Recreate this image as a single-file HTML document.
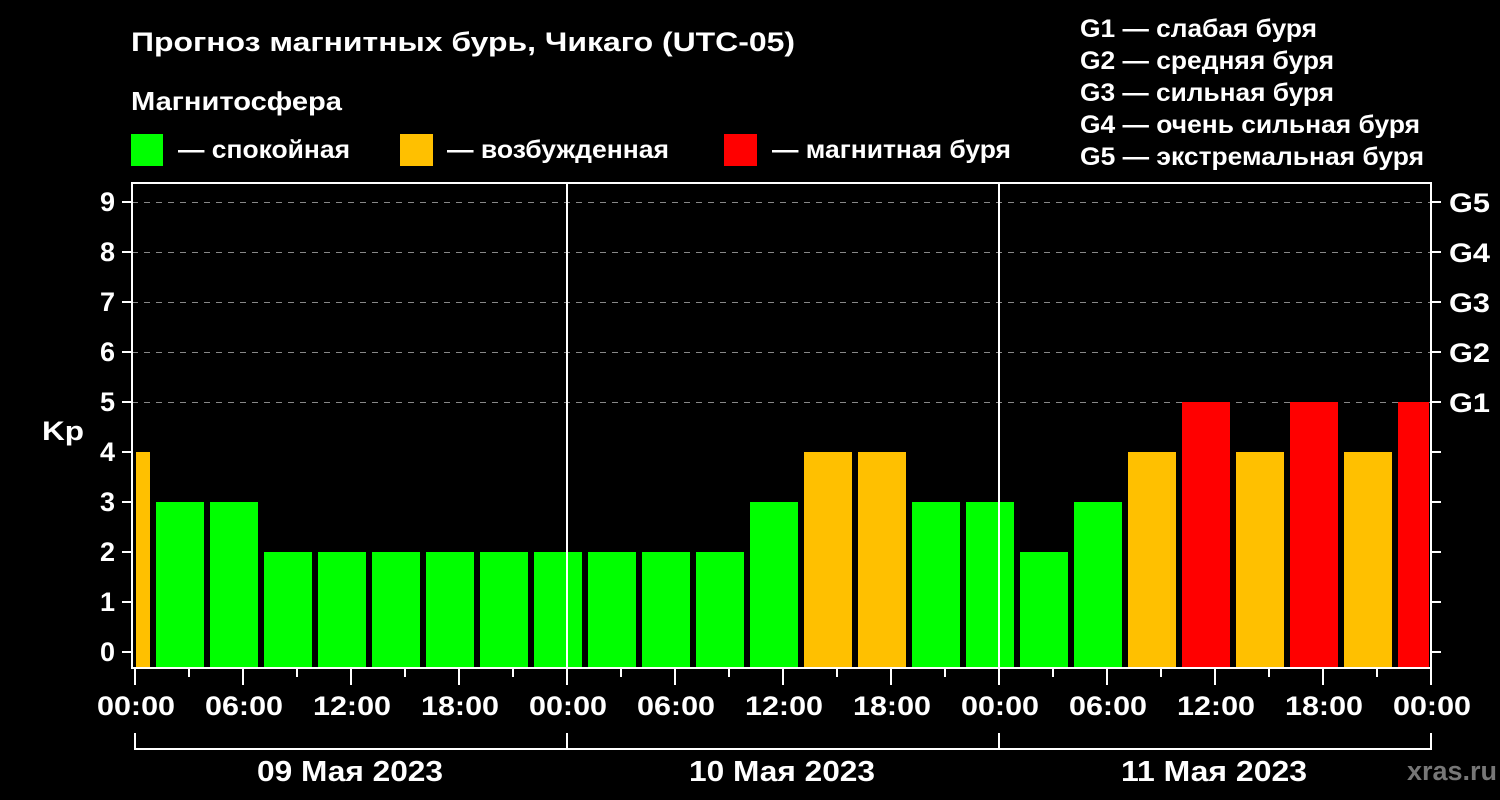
<!DOCTYPE html><html><head><meta charset="utf-8"><style>body{margin:0;background:#000}svg{display:block}text{font-family:"Liberation Sans",sans-serif;font-weight:bold;fill:#fff}</style></head><body>
<svg width="1500" height="800" xmlns="http://www.w3.org/2000/svg">
<rect width="1500" height="800" fill="#000"/>
<text x="131" y="51" font-size="27" textLength="664" lengthAdjust="spacingAndGlyphs">Прогноз магнитных бурь, Чикаго (UTC-05)</text>
<text x="131" y="110" font-size="26" textLength="211" lengthAdjust="spacingAndGlyphs">Магнитосфера</text>
<rect x="131" y="134" width="32" height="32" fill="#00ff00"/><text x="178" y="158" font-size="25" textLength="172" lengthAdjust="spacingAndGlyphs">— спокойная</text>
<rect x="400" y="134" width="33" height="32" fill="#ffc000"/><text x="447" y="158" font-size="25" textLength="222" lengthAdjust="spacingAndGlyphs">— возбужденная</text>
<rect x="724" y="134" width="33" height="32" fill="#ff0000"/><text x="772" y="158" font-size="25" textLength="239" lengthAdjust="spacingAndGlyphs">— магнитная буря</text>
<g font-size="25"><text x="1080" y="37" textLength="237" lengthAdjust="spacingAndGlyphs">G1 — слабая буря</text><text x="1080" y="69" textLength="254" lengthAdjust="spacingAndGlyphs">G2 — средняя буря</text><text x="1080" y="101" textLength="254" lengthAdjust="spacingAndGlyphs">G3 — сильная буря</text><text x="1080" y="133" textLength="340" lengthAdjust="spacingAndGlyphs">G4 — очень сильная буря</text><text x="1080" y="165" textLength="344" lengthAdjust="spacingAndGlyphs">G5 — экстремальная буря</text></g>
<g stroke="#888" stroke-width="1" stroke-dasharray="6,6"><line x1="132" y1="202.5" x2="1431" y2="202.5"/><line x1="132" y1="252.5" x2="1431" y2="252.5"/><line x1="132" y1="302.5" x2="1431" y2="302.5"/><line x1="132" y1="352.5" x2="1431" y2="352.5"/><line x1="132" y1="402.5" x2="1431" y2="402.5"/></g>
<g>
<rect x="136" y="452" width="14" height="216" fill="#ffc000"/>
<rect x="156" y="502" width="48" height="166" fill="#00ff00"/>
<rect x="210" y="502" width="48" height="166" fill="#00ff00"/>
<rect x="264" y="552" width="48" height="116" fill="#00ff00"/>
<rect x="318" y="552" width="48" height="116" fill="#00ff00"/>
<rect x="372" y="552" width="48" height="116" fill="#00ff00"/>
<rect x="426" y="552" width="48" height="116" fill="#00ff00"/>
<rect x="480" y="552" width="48" height="116" fill="#00ff00"/>
<rect x="534" y="552" width="48" height="116" fill="#00ff00"/>
<rect x="588" y="552" width="48" height="116" fill="#00ff00"/>
<rect x="642" y="552" width="48" height="116" fill="#00ff00"/>
<rect x="696" y="552" width="48" height="116" fill="#00ff00"/>
<rect x="750" y="502" width="48" height="166" fill="#00ff00"/>
<rect x="804" y="452" width="48" height="216" fill="#ffc000"/>
<rect x="858" y="452" width="48" height="216" fill="#ffc000"/>
<rect x="912" y="502" width="48" height="166" fill="#00ff00"/>
<rect x="966" y="502" width="48" height="166" fill="#00ff00"/>
<rect x="1020" y="552" width="48" height="116" fill="#00ff00"/>
<rect x="1074" y="502" width="48" height="166" fill="#00ff00"/>
<rect x="1128" y="452" width="48" height="216" fill="#ffc000"/>
<rect x="1182" y="402" width="48" height="266" fill="#ff0000"/>
<rect x="1236" y="452" width="48" height="216" fill="#ffc000"/>
<rect x="1290" y="402" width="48" height="266" fill="#ff0000"/>
<rect x="1344" y="452" width="48" height="216" fill="#ffc000"/>
<rect x="1398" y="402" width="31" height="266" fill="#ff0000"/>
</g>
<g stroke="#fff" stroke-width="2" fill="none">
<rect x="132" y="183" width="1299" height="485"/>
<line x1="567" y1="183" x2="567" y2="668"/><line x1="999" y1="183" x2="999" y2="668"/>
<path d="M122 202h10M122 252h10M122 302h10M122 352h10M122 402h10M122 452h10M122 502h10M122 552h10M122 602h10M122 652h10"/>
<path d="M1431 202h10M1431 252h10M1431 302h10M1431 352h10M1431 402h10M1431 452h10M1431 502h10M1431 552h10M1431 602h10M1431 652h10"/>
<path d="M135 668v17M189 668v9M243 668v17M297 668v9M351 668v17M405 668v9M459 668v17M513 668v9M567 668v17M621 668v9M675 668v17M729 668v9M783 668v17M837 668v9M891 668v17M945 668v9M999 668v17M1053 668v9M1107 668v17M1161 668v9M1215 668v17M1269 668v9M1323 668v17M1377 668v9M1431 668v17"/>
<path d="M135 733v16h1296v-16M567 733v16M999 733v16"/>
</g>
<g font-size="27" text-anchor="end"><text x="115" y="211">9</text><text x="115" y="261">8</text><text x="115" y="311">7</text><text x="115" y="361">6</text><text x="115" y="411">5</text><text x="115" y="461">4</text><text x="115" y="511">3</text><text x="115" y="561">2</text><text x="115" y="611">1</text><text x="115" y="661">0</text></g>
<text x="42" y="440" font-size="27" textLength="42" lengthAdjust="spacingAndGlyphs">Kp</text>
<g font-size="27"><text x="1449" y="212" textLength="41" lengthAdjust="spacingAndGlyphs">G5</text><text x="1449" y="262" textLength="41" lengthAdjust="spacingAndGlyphs">G4</text><text x="1449" y="312" textLength="41" lengthAdjust="spacingAndGlyphs">G3</text><text x="1449" y="362" textLength="41" lengthAdjust="spacingAndGlyphs">G2</text><text x="1449" y="412" textLength="41" lengthAdjust="spacingAndGlyphs">G1</text></g>
<g font-size="27" text-anchor="middle"><text x="136" y="715" textLength="78" lengthAdjust="spacingAndGlyphs">00:00</text><text x="244" y="715" textLength="78" lengthAdjust="spacingAndGlyphs">06:00</text><text x="352" y="715" textLength="78" lengthAdjust="spacingAndGlyphs">12:00</text><text x="460" y="715" textLength="78" lengthAdjust="spacingAndGlyphs">18:00</text><text x="568" y="715" textLength="78" lengthAdjust="spacingAndGlyphs">00:00</text><text x="676" y="715" textLength="78" lengthAdjust="spacingAndGlyphs">06:00</text><text x="784" y="715" textLength="78" lengthAdjust="spacingAndGlyphs">12:00</text><text x="892" y="715" textLength="78" lengthAdjust="spacingAndGlyphs">18:00</text><text x="1000" y="715" textLength="78" lengthAdjust="spacingAndGlyphs">00:00</text><text x="1108" y="715" textLength="78" lengthAdjust="spacingAndGlyphs">06:00</text><text x="1216" y="715" textLength="78" lengthAdjust="spacingAndGlyphs">12:00</text><text x="1324" y="715" textLength="78" lengthAdjust="spacingAndGlyphs">18:00</text><text x="1432" y="715" textLength="78" lengthAdjust="spacingAndGlyphs">00:00</text></g>
<g font-size="29" text-anchor="middle"><text x="350" y="781" textLength="186" lengthAdjust="spacingAndGlyphs">09 Мая 2023</text><text x="782" y="781" textLength="186" lengthAdjust="spacingAndGlyphs">10 Мая 2023</text><text x="1214" y="781" textLength="186" lengthAdjust="spacingAndGlyphs">11 Мая 2023</text></g>
<text x="1497" y="780" font-size="27" text-anchor="end" style="fill:#777">xras.ru</text>
</svg></body></html>
